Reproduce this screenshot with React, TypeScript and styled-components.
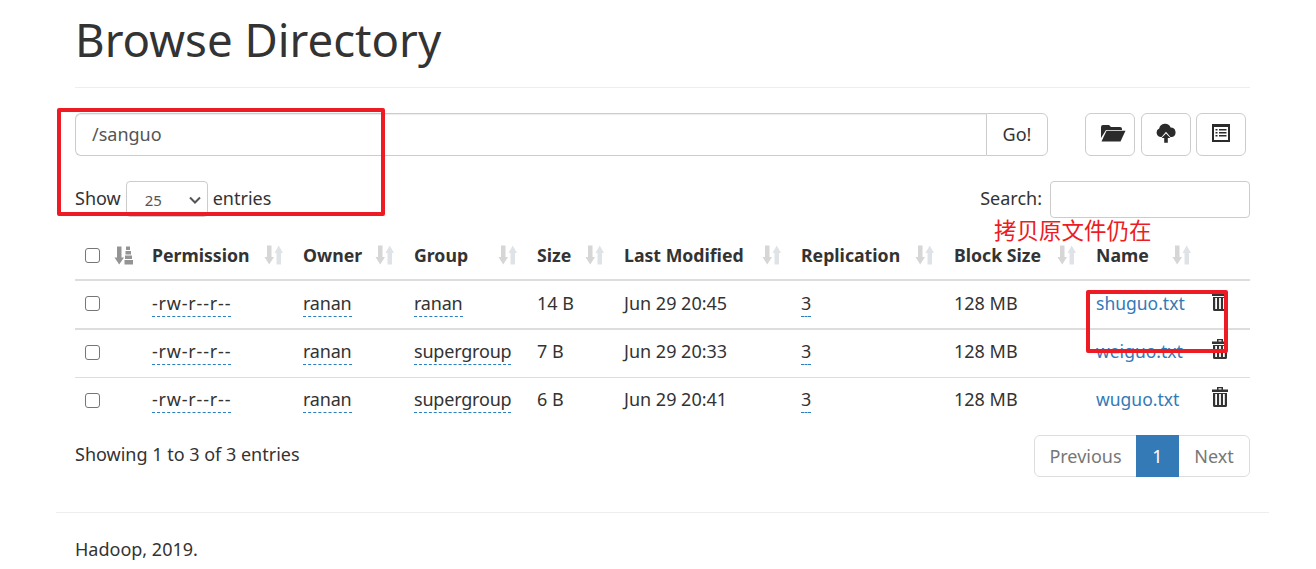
import React from "react";
import styled, { createGlobalStyle } from "styled-components";

const GlobalStyle = createGlobalStyle`
  html, body {
    margin: 0;
    padding: 0;
    background: #fff;
  }
  body {
    font-family: "Noto Sans", "Noto Sans CJK SC", sans-serif;
    font-size: 18px;
    color: #333;
  }
  * {
    box-sizing: border-box;
  }
`;

const Container = styled.div`
  position: relative;
  width: 1213px;
  height: 569px;
  margin-left: 56px;
  padding: 0 19px;
  overflow: hidden;
`;

const PageHeader = styled.div`
  height: 88px;
  border-bottom: 1px solid #eee;
`;

const Title = styled.h1`
  margin: 0;
  padding-top: 7px;
  font-size: 45.6px;
  line-height: 64px;
  font-weight: 400;
  color: #333;
`;

const Toolbar = styled.div`
  display: flex;
  align-items: center;
  margin-top: 25px;
  height: 43px;
`;

const PathGroup = styled.div`
  display: flex;
  flex: 1;
  height: 43px;
`;

const PathInput = styled.div`
  flex: 1;
  display: flex;
  align-items: center;
  padding: 0 0 2px 16px;
  border: 1px solid #ccc;
  border-right: 0;
  border-radius: 6px 0 0 6px;
  box-shadow: inset 0 1px 1px rgba(0, 0, 0, 0.075);
  color: #555;
`;

const GoButton = styled.div`
  width: 62px;
  display: flex;
  align-items: center;
  justify-content: center;
  padding-bottom: 1px;
  border: 1px solid #ccc;
  border-radius: 0 6px 6px 0;
`;

const IconGroup = styled.div`
  display: flex;
  gap: 5px;
  margin-left: 37px;
  margin-right: 4px;
`;

const IconButton = styled.div`
  width: 50px;
  height: 43px;
  display: flex;
  align-items: center;
  justify-content: center;
  padding-bottom: 3px;
  border: 1px solid #ccc;
  border-radius: 6px;
  color: #333;

  &:first-child {
    margin-right: 1px;
    padding-left: 6px;
  }
`;

const ControlsRow = styled.div`
  display: flex;
  align-items: center;
  justify-content: space-between;
  height: 36px;
  margin-top: 25px;
  padding-bottom: 3px;
`;

const Length = styled.div`
  display: flex;
  align-items: center;
  gap: 5px;
`;

const LengthSelect = styled.div`
  width: 82px;
  height: 36px;
  margin-bottom: -3px;
  display: flex;
  align-items: center;
  justify-content: space-between;
  padding: 2px 6px 0 18px;
  border: 1px solid #ccc;
  border-radius: 4px;
  font-size: 15px;
  color: #555;
`;

const SearchBox = styled.div`
  display: flex;
  align-items: center;
  gap: 8px;
`;

const SearchInput = styled.div`
  width: 200px;
  height: 37px;
  margin-bottom: -3px;
  border: 1px solid #ccc;
  border-radius: 4px;
`;

const Table = styled.table`
  width: 1175px;
  margin-top: 18px;
  border-collapse: collapse;
  table-layout: fixed;
`;

const HeadCell = styled.th`
  height: 45px;
  padding: 0 0 0 10px;
  border-bottom: 2px solid #ddd;
  text-align: left;
  font-size: 17.7px;
  font-weight: 700;
  color: #333;
`;

const HeadInner = styled.div<{ $gap: number }>`
  display: flex;
  align-items: center;
  justify-content: space-between;
  padding: 0 ${(p) => p.$gap}px 4px 0;
`;

const SelectHead = styled.div`
  display: flex;
  align-items: center;
  gap: 14px;
  padding-bottom: 3px;
`;

const BodyRow = styled.tr<{ $thick?: boolean }>`
  height: ${(p) => (p.$thick ? 49 : 48)}px;

  & + & > td {
    border-top: 1px solid #ddd;
  }
`;

const Cell = styled.td<{ $thick?: boolean }>`
  padding: 0 0 4px 10px;
  border-bottom: ${(p) => (p.$thick ? "2px solid #ddd" : "0")};
`;

const CheckCell = styled(Cell)`
  padding-bottom: 2px;
`;

const Check = styled.span`
  display: block;
  width: 15px;
  height: 15px;
  border: 1px solid #767676;
  border-radius: 3px;
  background: #fff;
`;

const Abbr = styled.span<{ $spacing?: number }>`
  border-bottom: 1px dashed #2b7fc0;
  padding-bottom: 1px;
  letter-spacing: ${(p) => p.$spacing ?? -0.2}px;
`;

const NameCell = styled.div`
  display: flex;
  align-items: center;
  justify-content: space-between;
  padding-right: 22px;
`;

const FileLink = styled.a`
  color: #337ab7;
  font-size: 17.5px;
  text-decoration: none;
`;

const TrashWrap = styled.span`
  display: block;
  height: 20px;
  margin-bottom: 4px;
`;

const TableFooter = styled.div`
  display: flex;
  justify-content: space-between;
  height: 87px;
`;

const Info = styled.div`
  padding-top: 16px;
  line-height: 26px;
`;

const Pager = styled.div`
  display: flex;
  height: 42px;
  margin-top: 10px;
  border: 1px solid #ddd;
  border-radius: 6px;
`;

const PageItem = styled.div<{ $active?: boolean; $w: number }>`
  width: ${(p) => p.$w}px;
  display: flex;
  align-items: center;
  justify-content: center;
  margin: ${(p) => (p.$active ? "-1px 0" : "0")};
  background: ${(p) => (p.$active ? "#337ab7" : "#fff")};
  color: ${(p) => (p.$active ? "#fff" : "#777")};
  border-radius: ${(p) => (p.$active ? "0" : "6px")};
`;

const Footer = styled.div`
  margin: 0 -19px;
  padding: 24px 19px 0;
  border-top: 1px solid #eee;
  line-height: 24px;
`;

const Annotation = styled.div<{ $x: number; $y: number; $w: number; $h: number }>`
  position: absolute;
  left: ${(p) => p.$x}px;
  top: ${(p) => p.$y}px;
  width: ${(p) => p.$w}px;
  height: ${(p) => p.$h}px;
  border: 4px solid #ed1c24;
  border-radius: 2px;
`;

const Note = styled.div`
  position: absolute;
  left: 938px;
  top: 213px;
  font-family: "Noto Sans CJK SC", sans-serif;
  font-size: 22.5px;
  line-height: 32px;
  color: #ed1c24;
  white-space: nowrap;
`;

const FolderIcon = () => (
  <svg width="25" height="18" viewBox="0 0 25 18" fill="#2b2b2b">
    <path d="M0 3 Q0 1 2 1 H8 L10 3 H19 Q21 3 21 5 V6 H5 L0 14 Z" />
    <path d="M5.5 6.8 H24.5 L19.5 17.5 H0.5 Z" />
  </svg>
);

const CloudIcon = () => (
  <svg width="20" height="20" viewBox="0 0 20 20" fill="#2b2b2b">
    <path d="M5 14 A4.4 4.4 0 0 1 3.2 5.6 A6 6 0 0 1 14.6 4.4 A4.9 4.9 0 0 1 16 14 H14.4 L10 8.8 L5.6 14 Z" />
    <path d="M10 10.4 L14.4 15 H11.8 V19.8 H8.2 V15 H5.6 Z" />
  </svg>
);

const ListIcon = () => (
  <svg width="18" height="18" viewBox="0 0 18 18">
    <rect x="1" y="1" width="16" height="16" fill="#fff" stroke="#2b2b2b" strokeWidth="2" />
    <rect x="0" y="0" width="18" height="3" fill="#2b2b2b" />
    <path
      d="M3.5 5h2v1.6h-2zM7 5h7.5v1.6H7zM3.5 8h2v1.6h-2zM7 8h7.5v1.6H7zM3.5 11h2v1.6h-2zM7 11h7.5v1.6H7z"
      fill="#2b2b2b"
    />
  </svg>
);

const TrashIcon = () => (
  <svg width="16" height="20" viewBox="0 0 16 20" fill="#333">
    <path d="M5 0 H11 V2.5 H16 V5 H0 V2.5 H5 Z M6.5 1.2 V2.5 H9.5 V1.2 Z" fillRule="evenodd" />
    <path
      fillRule="evenodd"
      d="M1 6 H15 V18.5 Q15 20 13.5 20 H2.5 Q1 20 1 18.5 Z M3.2 7 V18 H5 V7 Z M7.1 7 V18 H8.9 V7 Z M11 7 V18 H12.8 V7 Z"
    />
  </svg>
);

const SortBoth = () => (
  <svg width="19" height="20" viewBox="0 0 19 19" preserveAspectRatio="none">
    <path d="M3 0.5 H7.5 V11.5 H10 L5.2 18.5 L0.5 11.5 H3 Z" fill="#d6d6d6" />
    <path d="M12.5 18.5 H17 V7.5 H19 L14.7 0.5 L10.5 7.5 H12.5 Z" fill="#dfe3e8" />
  </svg>
);

const SortAsc = () => (
  <svg width="19" height="19" viewBox="0 0 19 19" fill="#949494">
    <path d="M3 0.5 H7.5 V11.5 H10 L5.2 18.5 L0.5 11.5 H3 Z" />
    <path d="M12 0.5h4v3.5h-4zM11.5 5h5.5v3.5h-5.5zM11 9.5h7v3.5h-7zM10.5 14h8.5v4.5h-8.5z" />
  </svg>
);

const Chevron = () => (
  <svg width="12" height="8" viewBox="0 0 12 8" fill="none" stroke="#555" strokeWidth="2">
    <path d="M1 1.5 L6 6.5 L11 1.5" />
  </svg>
);

const columns = [
  { title: "Permission", width: 151, gap: 10 },
  { title: "Owner", width: 111, gap: 10 },
  { title: "Group", width: 123, gap: 10 },
  { title: "Size", width: 87, gap: 10 },
  { title: "Last Modified", width: 177, gap: 10 },
  { title: "Replication", width: 153, gap: 10 },
  { title: "Block Size", width: 142, gap: 10 },
  { title: "Name", width: 164, gap: 59 },
];

const files = [
  { group: "ranan", size: "14 B", date: "Jun 29 20:45", name: "shuguo.txt" },
  { group: "supergroup", size: "7 B", date: "Jun 29 20:33", name: "weiguo.txt" },
  { group: "supergroup", size: "6 B", date: "Jun 29 20:41", name: "wuguo.txt" },
];

export default function App() {
  return (
    <Container>
      <GlobalStyle />
      <PageHeader>
        <Title>Browse Directory</Title>
      </PageHeader>
      <Toolbar>
        <PathGroup>
          <PathInput>/sanguo</PathInput>
          <GoButton>Go!</GoButton>
        </PathGroup>
        <IconGroup>
          <IconButton>
            <FolderIcon />
          </IconButton>
          <IconButton>
            <CloudIcon />
          </IconButton>
          <IconButton>
            <ListIcon />
          </IconButton>
        </IconGroup>
      </Toolbar>
      <ControlsRow>
        <Length>
          Show
          <LengthSelect>
            25
            <Chevron />
          </LengthSelect>
          entries
        </Length>
        <SearchBox>
          Search:
          <SearchInput />
        </SearchBox>
      </ControlsRow>
      <Table>
        <colgroup>
          <col width={67} />
          {columns.map((c) => (
            <col key={c.title} width={c.width} />
          ))}
        </colgroup>
        <thead>
          <tr>
            <HeadCell>
              <SelectHead>
                <Check />
                <SortAsc />
              </SelectHead>
            </HeadCell>
            {columns.map((c) => (
              <HeadCell key={c.title}>
                <HeadInner $gap={c.gap}>
                  {c.title}
                  <SortBoth />
                </HeadInner>
              </HeadCell>
            ))}
          </tr>
        </thead>
        <tbody>
          {files.map((f, i) => (
            <BodyRow key={f.name} $thick={i === 0}>
              <CheckCell $thick={i === 0}>
                <Check />
              </CheckCell>
              <Cell $thick={i === 0}>
                <Abbr $spacing={0.8}>-rw-r--r--</Abbr>
              </Cell>
              <Cell $thick={i === 0}>
                <Abbr>ranan</Abbr>
              </Cell>
              <Cell $thick={i === 0}>
                <Abbr>{f.group}</Abbr>
              </Cell>
              <Cell $thick={i === 0}>{f.size}</Cell>
              <Cell $thick={i === 0}>{f.date}</Cell>
              <Cell $thick={i === 0}>
                <Abbr>3</Abbr>
              </Cell>
              <Cell $thick={i === 0}>128 MB</Cell>
              <Cell $thick={i === 0}>
                <NameCell>
                  <FileLink>{f.name}</FileLink>
                  <TrashWrap>
                    <TrashIcon />
                  </TrashWrap>
                </NameCell>
              </Cell>
            </BodyRow>
          ))}
        </tbody>
      </Table>
      <TableFooter>
        <Info>Showing 1 to 3 of 3 entries</Info>
        <Pager>
          <PageItem $w={101}>Previous</PageItem>
          <PageItem $w={43} $active>
            1
          </PageItem>
          <PageItem $w={70}>Next</PageItem>
        </Pager>
      </TableFooter>
      <Footer>Hadoop, 2019.</Footer>
      <Annotation $x={1} $y={108} $w={328} $h={108} />
      <Annotation $x={1030} $y={290} $w={142} $h={63} />
      <Note>拷贝原文件仍在</Note>
    </Container>
  );
}
